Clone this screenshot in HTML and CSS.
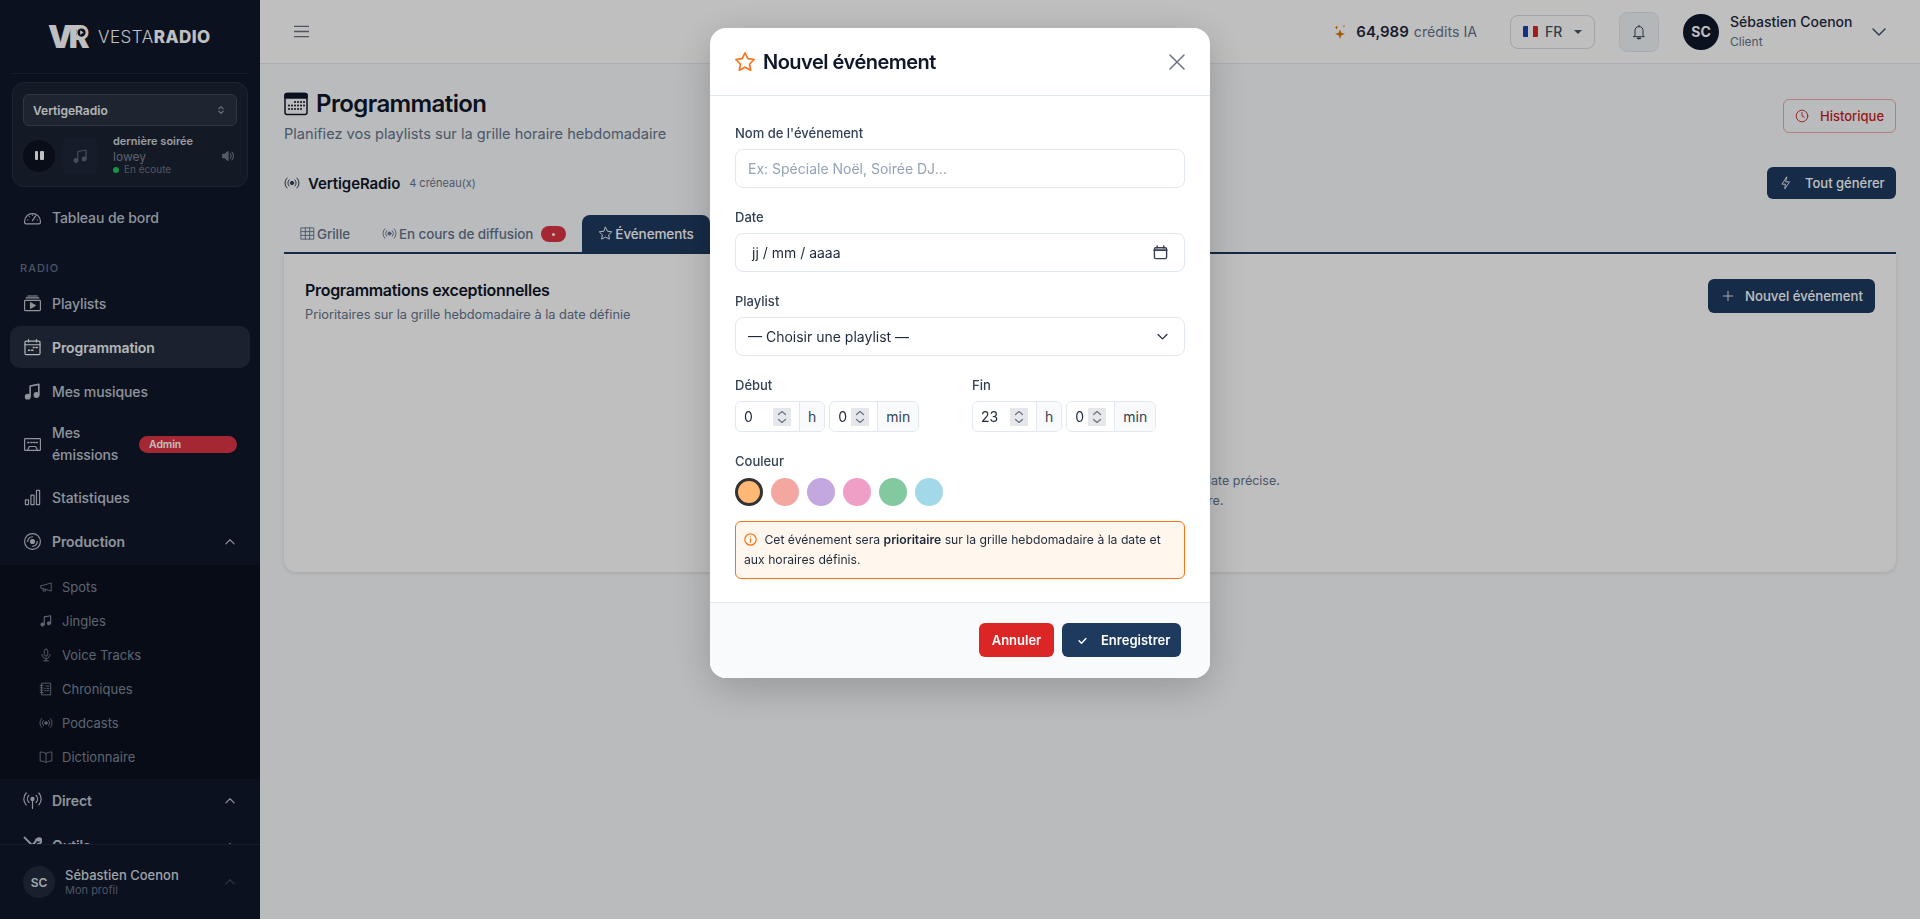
FILE: index.html
```html
<!DOCTYPE html>
<html lang="fr">
<head>
    <meta charset="UTF-8">
    <meta name="viewport" content="width=device-width, initial-scale=1.0">
    <title>Programmation - VestaRadio</title>
    <link rel="stylesheet" href="styles.css">
</head>
<body>
<div class="app">
    <!-- Sidebar -->
    <aside class="sidebar">
        <div class="brand">
            <span class="brand-mark">VR<svg class="brand-play" viewBox="0 0 12 12"><circle cx="6" cy="6" r="5.2" fill="#0f172a" stroke="#fff" stroke-width="1.4"/><path d="M4.6 3.6l3.6 2.4-3.6 2.4z" fill="#fff" stroke="none"/></svg></span>
            <span class="brand-name">VESTA<b>RADIO</b></span>
        </div>

        <div class="player">
            <div class="station-select">
                <span>VertigeRadio</span>
                <svg class="ico-10" viewBox="0 0 12 12"><path d="M3.5 4.5L6 2l2.5 2.5M3.5 7.5L6 10l2.5-2.5"/></svg>
            </div>
            <div class="player-row">
                <span class="pause-btn"><i></i><i></i></span>
                <span class="cover">
                    <svg class="ico-18" viewBox="0 0 24 24"><path d="M9 18V6l11-2v12"/><circle cx="6.5" cy="18" r="2.5" fill="currentColor"/><circle cx="17.5" cy="16" r="2.5" fill="currentColor"/></svg>
                </span>
                <div class="track">
                    <div class="track-title">dernière soirée</div>
                    <div class="track-artist">lowey</div>
                    <div class="track-status"><span class="dot"></span>En écoute</div>
                </div>
                <svg class="volume" viewBox="0 0 16 16"><path d="M2 6h2.5L8 3v10L4.5 10H2z" fill="currentColor"/><path d="M10.5 5.5a3.5 3.5 0 0 1 0 5M12.5 3.5a6.5 6.5 0 0 1 0 9"/></svg>
            </div>
        </div>

        <nav class="nav">
            <a class="nav-item">
                <svg class="nav-ico" viewBox="0 0 24 24"><path d="M2 17a10 10 0 0 1 20 0v1a2 2 0 0 1-2 2H4a2 2 0 0 1-2-2z"/><path d="M12 16l4-6M6 15h.01M8 11h.01M12 9h.01M18 15h.01"/></svg>
                <span>Tableau de bord</span>
            </a>

            <div class="nav-label">RADIO</div>

            <a class="nav-item">
                <svg class="nav-ico" viewBox="0 0 24 24"><rect x="2" y="8" width="20" height="13" rx="1"/><path d="M4 5h16M6 2.5h12"/><path d="M9.5 11l6 3.5-6 3.5z" fill="currentColor"/></svg>
                <span>Playlists</span>
            </a>
            <a class="nav-item active">
                <svg class="nav-ico" viewBox="0 0 24 24"><rect x="2.5" y="4" width="19" height="17" rx="1.5"/><path d="M2.5 8.5h19M7 2v3M17 2v3"/><path d="M13 12h1M16.5 12h1.5M7 15.5h1.5M11 15.5h1.5" stroke-width="2"/></svg>
                <span>Programmation</span>
            </a>
            <a class="nav-item">
                <svg class="nav-ico" viewBox="0 0 24 24"><path d="M9 18V5l11-2v13" stroke-width="2"/><circle cx="6" cy="18.5" r="3" fill="currentColor"/><circle cx="17" cy="16.5" r="3" fill="currentColor"/></svg>
                <span>Mes musiques</span>
            </a>
            <a class="nav-item two-lines">
                <svg class="nav-ico" viewBox="0 0 24 24"><rect x="2" y="4.5" width="20" height="15" rx="1"/><path d="M6 9.5h1.5M10 9.5h1.5M13.5 9.5H15M17 9.5h1" stroke-width="2"/><path d="M5.5 19.5l2.5-5h8l2.5 5"/></svg>
                <span class="nav-text">Mes émissions</span>
                <span class="badge-admin">Admin</span>
            </a>
            <a class="nav-item">
                <svg class="nav-ico" viewBox="0 0 24 24"><rect x="3" y="15" width="4" height="6" rx=".5"/><rect x="10" y="9" width="4" height="12" rx=".5"/><rect x="17" y="3" width="4" height="18" rx=".5"/></svg>
                <span>Statistiques</span>
            </a>
            <a class="nav-item group">
                <svg class="nav-ico" viewBox="0 0 24 24"><circle cx="12" cy="12" r="10"/><circle cx="12" cy="12" r="2.5" fill="currentColor"/><path d="M12 6a6 6 0 0 0-6 6M18 12a6 6 0 0 1-6 6"/></svg>
                <span>Production</span>
                <svg class="nav-chev" viewBox="0 0 16 16"><path d="M2.5 10.5L8 5l5.5 5.5"/></svg>
            </a>
            <div class="subnav">
                <a class="sub-item">
                    <svg class="sub-ico" viewBox="0 0 24 24"><path d="M3 10v4l3 .5 15 4.5V5L6 9.5z"/><path d="M7 15v4h4v-2.8"/></svg>
                    <span>Spots</span>
                </a>
                <a class="sub-item">
                    <svg class="sub-ico" viewBox="0 0 24 24"><path d="M9 18V5l11-2v13" stroke-width="2"/><circle cx="6" cy="18" r="2.8" fill="currentColor"/><circle cx="17" cy="16" r="2.8" fill="currentColor"/></svg>
                    <span>Jingles</span>
                </a>
                <a class="sub-item">
                    <svg class="sub-ico" viewBox="0 0 24 24"><rect x="9" y="2" width="6" height="12" rx="3"/><path d="M5 11a7 7 0 0 0 14 0M12 18v4M8 22h8"/></svg>
                    <span>Voice Tracks</span>
                </a>
                <a class="sub-item">
                    <svg class="sub-ico" viewBox="0 0 24 24"><path d="M5 2h15v20H5zM2 6h5M2 10h5M2 14h5M2 18h5M12 7h5M14 11h3M10 11h1M10 15h7"/></svg>
                    <span>Chroniques</span>
                </a>
                <a class="sub-item">
                    <svg class="sub-ico" viewBox="0 0 24 24"><circle cx="12" cy="12" r="2.2" fill="currentColor"/><path d="M7.5 7.5a6.5 6.5 0 0 0 0 9M16.5 7.5a6.5 6.5 0 0 1 0 9M4.5 4.5a10.5 10.5 0 0 0 0 15M19.5 4.5a10.5 10.5 0 0 1 0 15"/></svg>
                    <span>Podcasts</span>
                </a>
                <a class="sub-item">
                    <svg class="sub-ico" viewBox="0 0 24 24"><path d="M12 6C9.5 4 6 3.5 2 3.5V19c4 0 7.5.5 10 2.5 2.5-2 6-2.5 10-2.5V3.5C18 3.5 14.5 4 12 6zM12 6v15.5"/></svg>
                    <span>Dictionnaire</span>
                </a>
            </div>
            <a class="nav-item group">
                <svg class="nav-ico" viewBox="0 0 24 24"><circle cx="12" cy="10" r="2" fill="currentColor"/><path d="M12 12v10M7.5 5.5a6.5 6.5 0 0 0 0 9M16.5 5.5a6.5 6.5 0 0 1 0 9M4 2.5a11 11 0 0 0 0 15M20 2.5a11 11 0 0 1 0 15"/></svg>
                <span>Direct</span>
                <svg class="nav-chev" viewBox="0 0 16 16"><path d="M2.5 10.5L8 5l5.5 5.5"/></svg>
            </a>
            <a class="nav-item group">
                <svg class="nav-ico" viewBox="0 0 24 24"><path d="M2 2l9 9M22 3c-3-1-6 1-6 4l-12 13 2 2 13-12c3 0 5-3 4-6l-3 2-2-1z" stroke-width="2.5"/></svg>
                <span>Outils</span>
                <svg class="nav-chev" viewBox="0 0 16 16"><path d="M2.5 10.5L8 5l5.5 5.5"/></svg>
            </a>
        </nav>

        <div class="side-user">
            <span class="side-avatar">SC</span>
            <div class="side-user-text">
                <div class="side-user-name">Sébastien Coenon</div>
                <div class="side-user-sub">Mon profil</div>
            </div>
            <svg class="side-chev" viewBox="0 0 16 16"><path d="M2.5 10.5L8 5l5.5 5.5"/></svg>
        </div>
    </aside>

    <!-- Main -->
    <div class="main">
        <header class="topbar">
            <svg class="burger" viewBox="0 0 16 14"><path d="M0 1.5h16M0 7h16M0 12.5h16"/></svg>
            <div class="credits">
                <svg class="sparkle" viewBox="0 0 12 16"><path d="M6 5.5l1.3 3.2L11 10l-3.7 1.3L6 15l-1.3-3.7L1 10l3.700-1.300z"/><path d="M2.500 1.500l.6 1.500 1.400.6-1.400.5-.6 1.500-.6-1.500L.5 3.600 1.900 3zM10 .5l.3 1.200.9.4-.9.4-.3 1.200-.3-1.200-.9-.4.9-.4z"/></svg>
                <b>64,989</b> <span>crédits IA</span>
            </div>
            <div class="lang">
                <span class="flag"><i class="fl-b"></i><i class="fl-w"></i><i class="fl-r"></i></span>
                <span>FR</span>
                <span class="caret"></span>
            </div>
            <span class="bell">
                <svg viewBox="0 0 24 24"><path d="M6 17V10a6 6 0 0 1 12 0v7l2 2H4zM12 2v2"/><path d="M10 21.5h4" stroke-width="2.5"/></svg>
            </span>
            <span class="top-avatar">SC</span>
            <div class="top-user">
                <div class="top-user-name">Sébastien Coenon</div>
                <div class="top-user-role">Client</div>
            </div>
            <svg class="top-chev" viewBox="0 0 16 16"><path d="M2 5l6 6 6-6"/></svg>
        </header>

        <main class="content">
            <div class="page-head">
                <div>
                    <h1 class="page-title">
                        <svg viewBox="0 0 24 24"><rect x="1" y="1.5" width="22" height="21" rx="2"/><path d="M1 3.5a2 2 0 0 1 2-2h18a2 2 0 0 1 2 2V6H1z" fill="currentColor"/><path class="dots" d="M11 10h.01M14 10h.01M17 10h.01M20 10h.01M5 13.5h.01M8 13.5h.01M11 13.5h.01M14 13.5h.01M17 13.5h.01M20 13.5h.01M5 17h.01M8 17h.01M11 17h.01M14 17h.01M17 17h.01"/></svg>
                        Programmation
                    </h1>
                    <p class="page-sub">Planifiez vos playlists sur la grille horaire hebdomadaire</p>
                </div>
                <button class="btn-history">
                    <svg class="ico-14" viewBox="0 0 24 24"><circle cx="12" cy="12" r="10"/><path d="M12 6v6l4 2"/></svg>
                    Historique
                </button>
            </div>

            <div class="station-row">
                <div class="station-info">
                    <svg class="ico-16" viewBox="0 0 24 24"><circle cx="12" cy="12" r="2.5" fill="currentColor"/><path d="M7.5 7.5a6.5 6.5 0 0 0 0 9M16.5 7.5a6.5 6.5 0 0 1 0 9M4.5 4.5a10.5 10.5 0 0 0 0 15M19.5 4.5a10.5 10.5 0 0 1 0 15"/></svg>
                    <strong>VertigeRadio</strong>
                    <small>4 créneau(x)</small>
                </div>
                <button class="btn-primary btn-gen">
                    <svg class="ico-14" viewBox="0 0 24 24"><path d="M13 2L5 14h6l-1 8 8-12h-6z"/></svg>
                    Tout générer
                </button>
            </div>

            <div class="tabs">
                <a class="tab">
                    <svg class="ico-15" viewBox="0 0 24 24"><path d="M2 3h20v18H2zM2 9h20M2 15h20M8.5 3v18M15.5 3v18"/></svg>
                    Grille
                </a>
                <a class="tab">
                    <svg class="ico-15" viewBox="0 0 24 24"><circle cx="12" cy="12" r="2.5" fill="currentColor"/><path d="M7.5 7.5a6.5 6.5 0 0 0 0 9M16.5 7.5a6.5 6.5 0 0 1 0 9M4.5 4.5a10.5 10.5 0 0 0 0 15M19.5 4.5a10.5 10.5 0 0 1 0 15"/></svg>
                    En cours de diffusion
                    <span class="tab-badge"><i></i></span>
                </a>
                <a class="tab active">
                    <svg class="ico-15" viewBox="0 0 24 24"><path d="M12 2l3.1 6.3 6.9 1-5 4.9 1.2 6.800-6.200-3.200L5.800 21 7 14.200 2 9.300l6.900-1z"/></svg>
                    Événements
                </a>
            </div>

            <section class="panel">
                <div class="panel-head">
                    <div>
                        <h2>Programmations exceptionnelles</h2>
                        <p>Prioritaires sur la grille hebdomadaire à la date définie</p>
                    </div>
                    <button class="btn-primary btn-new">
                        <svg class="ico-14" viewBox="0 0 24 24"><path d="M12 4v16M4 12h16"/></svg>
                        Nouvel événement
                    </button>
                </div>
                <div class="empty">
                    <p>Créez un événement pour lancer une playlist à une date précise.</p>
                    <p>Il remplacera alors votre grille hebdomadaire.</p>
                </div>
            </section>
        </main>
    </div>
</div>

<!-- Modal -->
<div class="overlay">
    <div class="modal">
        <div class="modal-head">
            <svg class="modal-star" viewBox="0 0 24 24"><path d="M12 2l3.1 6.3 6.9 1-5 4.9 1.2 6.800-6.200-3.200L5.800 21 7 14.200 2 9.300l6.900-1z"/></svg>
            <h3>Nouvel événement</h3>
            <svg class="modal-close" viewBox="0 0 16 16"><path d="M1 1l14 14M15 1L1 15"/></svg>
        </div>
        <div class="modal-body">
            <div class="field">
                <label>Nom de l'événement</label>
                <input class="control" type="text" placeholder="Ex: Spéciale Noël, Soirée DJ...">
            </div>
            <div class="field">
                <label>Date</label>
                <div class="control control-date">
                    <span>jj / mm / aaaa</span>
                    <svg viewBox="0 0 16 16"><rect x="1.5" y="3" width="13" height="11.5" rx="1.5"/><path d="M1.5 5.5h13" stroke-width="2"/><path d="M4.5 1v2M11.5 1v2"/></svg>
                </div>
            </div>
            <div class="field">
                <label>Playlist</label>
                <div class="control control-select">
                    <span>— Choisir une playlist —</span>
                    <svg viewBox="0 0 16 16"><path d="M2.5 5.5L8 11l5.5-5.5"/></svg>
                </div>
            </div>
            <div class="time-grid">
                <div class="field">
                    <label>Début</label>
                    <div class="time-row">
                        <div class="time-group">
                            <input class="num num-h" type="number" value="0">
                            <span class="spin"><svg viewBox="0 0 18 18"><path d="M5.5 6.5L9 3.5l3.5 3M5.5 11.5L9 14.500l3.500-3"/></svg></span>
                            <span class="unit">h</span>
                        </div>
                        <div class="time-group">
                            <input class="num num-m" type="number" value="0">
                            <span class="spin"><svg viewBox="0 0 18 18"><path d="M5.5 6.5L9 3.5l3.5 3M5.5 11.5L9 14.500l3.500-3"/></svg></span>
                            <span class="unit">min</span>
                        </div>
                    </div>
                </div>
                <div class="field">
                    <label>Fin</label>
                    <div class="time-row">
                        <div class="time-group">
                            <input class="num num-h" type="number" value="23">
                            <span class="spin"><svg viewBox="0 0 18 18"><path d="M5.5 6.5L9 3.5l3.5 3M5.5 11.5L9 14.500l3.500-3"/></svg></span>
                            <span class="unit">h</span>
                        </div>
                        <div class="time-group">
                            <input class="num num-m" type="number" value="0">
                            <span class="spin"><svg viewBox="0 0 18 18"><path d="M5.5 6.5L9 3.5l3.5 3M5.5 11.5L9 14.500l3.500-3"/></svg></span>
                            <span class="unit">min</span>
                        </div>
                    </div>
                </div>
            </div>
            <div class="field field-color">
                <label>Couleur</label>
                <div class="swatches">
                    <span class="swatch selected c1"></span>
                    <span class="swatch c2"></span>
                    <span class="swatch c3"></span>
                    <span class="swatch c4"></span>
                    <span class="swatch c5"></span>
                    <span class="swatch c6"></span>
                </div>
            </div>
            <div class="notice">
                <svg viewBox="0 0 16 16"><circle cx="8" cy="8" r="7"/><path d="M8 7.2v4M8 4.6v.01"/></svg>
                Cet événement sera <b>prioritaire</b> sur la grille hebdomadaire à la date et aux horaires définis.
            </div>
        </div>
        <div class="modal-foot">
            <button class="btn-cancel">Annuler</button>
            <button class="btn-save">
                <svg viewBox="0 0 16 16"><path d="M3 8.5L6.5 12 13 5"/></svg>
                Enregistrer
            </button>
        </div>
    </div>
</div>
</body>
</html>
```

FILE: styles.css
```css
* {
    box-sizing: border-box;
}

body {
    margin: 0;
    font-family: Inter, "Noto Sans", sans-serif;
    background: #f8fafc;
    color: #0f172a;
    overflow: hidden;
}

svg {
    fill: none;
    stroke: currentColor;
    stroke-width: 1.5;
    stroke-linecap: round;
    stroke-linejoin: round;
    flex-shrink: 0;
}

.ico-10 { width: 10px; height: 10px; }
.ico-14 { width: 14px; height: 14px; }
.ico-15 { width: 15px; height: 15px; }
.ico-16 { width: 16px; height: 16px; }
.ico-18 { width: 18px; height: 18px; }

.app {
    display: flex;
    height: 100vh;
}

/* Sidebar */
.sidebar {
    width: 260px;
    flex-shrink: 0;
    background: #0f172a;
    color: #c0c6d0;
    display: flex;
    flex-direction: column;
    height: 100%;
}

.brand {
    height: 74px;
    margin: 0 12px;
    padding: 0 0 0 36px;
    display: flex;
    align-items: center;
    gap: 8px;
    border-bottom: 1px solid #1c2536;
    color: #fff;
}

.brand-mark {
    position: relative;
    font-size: 31px;
    font-weight: 900;
    letter-spacing: -4px;
    line-height: 1;
    width: 42px;
}

.brand-play {
    position: absolute;
    top: 6px;
    right: 3px;
    width: 11px;
    height: 11px;
}

.brand-name {
    font-size: 17px;
    font-weight: 300;
    letter-spacing: .5px;
}

.brand-name b {
    font-weight: 800;
}

.player {
    margin: 8px 12px 0;
    height: 105px;
    padding: 11px 10px;
    background: #1a2232;
    border: 1px solid #273041;
    border-radius: 12px;
}

.station-select {
    height: 32px;
    padding: 0 10px 0 9px;
    display: flex;
    align-items: center;
    justify-content: space-between;
    background: #2a3240;
    border: 1px solid #414a5a;
    border-radius: 6px;
    font-size: 12px;
    font-weight: 600;
    color: #eef0f4;
}

.station-select svg {
    color: #8a92a0;
}

.player-row {
    display: flex;
    align-items: center;
    margin-top: 10px;
}

.pause-btn {
    width: 32px;
    height: 32px;
    border-radius: 50%;
    background: #0b1220;
    display: flex;
    align-items: center;
    justify-content: center;
    gap: 2px;
}

.pause-btn i {
    width: 3.5px;
    height: 9px;
    border-radius: 1px;
    background: #fff;
}

.cover {
    width: 36px;
    height: 36px;
    margin-left: 7px;
    border-radius: 6px;
    background: #1e2738;
    color: #5f6a7a;
    display: flex;
    align-items: center;
    justify-content: center;
}

.track {
    margin-left: 15px;
    margin-top: -2px;
    flex: 1;
    min-width: 0;
}

.track-title {
    font-size: 11px;
    font-weight: 600;
    line-height: 14px;
    margin-bottom: 2px;
    color: #d0d4da;
}

.track-artist {
    font-size: 12px;
    line-height: 14px;
    color: #7a8494;
}

.track-status {
    font-size: 10px;
    line-height: 11px;
    color: #6b7585;
    display: flex;
    align-items: center;
    gap: 5px;
}

.dot {
    width: 6px;
    height: 6px;
    border-radius: 50%;
    background: #22c55e;
}

.volume {
    width: 14px;
    height: 14px;
    margin-right: 2px;
    color: #737d8d;
    stroke-width: 1.3;
}

.nav {
    flex: 1;
    min-height: 0;
    overflow: hidden;
    padding-top: 9px;
}

.nav-item {
    display: flex;
    align-items: center;
    gap: 10px;
    height: 42px;
    margin: 0 10px 2px;
    padding: 0 12px 0 13px;
    border-radius: 10px;
    font-size: 14px;
    font-weight: 500;
    letter-spacing: -.1px;
    color: #bfc5cf;
}

.nav-item.active {
    background: #252e3f;
    color: #f1f3f6;
    font-weight: 600;
}

.nav-item.two-lines {
    height: 60px;
    line-height: 22px;
}

.nav-item.group {
    height: 43px;
    font-weight: 600;
}

.nav-text {
    width: 60px;
    flex-shrink: 0;
}

.nav-ico {
    width: 19px;
    height: 19px;
}

.nav-chev {
    width: 12px;
    height: 12px;
    margin-left: auto;
    margin-right: 2px;
}

.nav-label {
    margin: 23px 0 7px 20px;
    font-size: 11px;
    font-weight: 500;
    letter-spacing: 1px;
    line-height: 14px;
    color: #677184;
}

.badge-admin {
    margin-left: auto;
    width: 98px;
    height: 17px;
    margin-right: 1px;
    padding-left: 10px;
    border-radius: 9px;
    background: #dc3545;
    color: #fff;
    font-size: 10.5px;
    font-weight: 600;
    line-height: 17px;
}

.subnav {
    background: #0b111f;
    padding: 5px 0 5px;
}

.sub-item {
    display: flex;
    align-items: center;
    gap: 9px;
    height: 34px;
    padding-left: 39px;
    font-size: 13px;
    color: #7d8797;
}

.sub-ico {
    width: 14px;
    height: 14px;
}

.side-user {
    height: 75px;
    flex-shrink: 0;
    background: #0f172a;
    border-top: 1px solid #1e2739;
    display: flex;
    align-items: center;
    padding: 0 24px 0 23px;
}

.side-avatar {
    width: 32px;
    height: 32px;
    border-radius: 50%;
    background: #222b3c;
    font-size: 12px;
    font-weight: 600;
    color: #dde0e5;
    display: flex;
    align-items: center;
    justify-content: center;
}

.side-user-text {
    margin-left: 10px;
    flex: 1;
}

.side-user-name {
    font-size: 13px;
    font-weight: 500;
    line-height: 16px;
    color: #d5d9df;
}

.side-user-sub {
    font-size: 11px;
    line-height: 14px;
    color: #667083;
}

.side-chev {
    width: 12px;
    height: 12px;
    color: #3f4859;
}

/* Main */
.main {
    flex: 1;
    min-width: 0;
    display: flex;
    flex-direction: column;
}

.topbar {
    height: 64px;
    flex-shrink: 0;
    background: #fff;
    border-bottom: 1px solid #e2e8f0;
    display: flex;
    align-items: center;
    padding: 0 24px 0 34px;
}

.burger {
    width: 15px;
    height: 13px;
    color: #6b7280;
    margin-right: auto;
}

.credits {
    display: flex;
    align-items: center;
    gap: 5px;
    font-size: 15px;
}

.credits b {
    font-weight: 600;
    color: #1e293b;
}

.credits span {
    font-size: 14.2px;
    color: #64748b;
}

.sparkle {
    width: 12px;
    height: 16px;
    margin-right: 5px;
    fill: #d97706;
    stroke: none;
}

.lang {
    margin-left: 33px;
    width: 85px;
    height: 34px;
    border: 1px solid #d5dbe3;
    border-radius: 8px;
    display: flex;
    align-items: center;
    padding-left: 12px;
    font-size: 14px;
    font-weight: 500;
    color: #475569;
}

.flag {
    display: flex;
    width: 15px;
    height: 11px;
    margin-right: 7px;
    border-radius: 1px;
    overflow: hidden;
}

.flag i {
    flex: 1;
}

.fl-b { background: #1e40af; }
.fl-w { background: #fff; }
.fl-r { background: #dc2626; }

.caret {
    margin-left: 12px;
    border-left: 4px solid transparent;
    border-right: 4px solid transparent;
    border-top: 4px solid #475569;
}

.bell {
    margin-left: 24px;
    width: 40px;
    height: 40px;
    border-radius: 8px;
    background: #f1f5f9;
    border: 1px solid #e2e8f0;
    display: flex;
    align-items: center;
    justify-content: center;
    color: #334155;
}

.bell svg {
    width: 16px;
    height: 16px;
}

.top-avatar {
    margin-left: 24px;
    width: 36px;
    height: 36px;
    border-radius: 50%;
    background: #0f172a;
    color: #fff;
    font-size: 14px;
    font-weight: 700;
    display: flex;
    align-items: center;
    justify-content: center;
}

.top-user {
    margin-left: 11px;
    width: 122px;
    white-space: nowrap;
}

.top-user-name {
    font-size: 14px;
    font-weight: 500;
    line-height: 20px;
    color: #1e293b;
}

.top-user-role {
    font-size: 12px;
    line-height: 20px;
    color: #64748b;
}

.top-chev {
    width: 16px;
    height: 16px;
    margin-left: 19px;
    margin-right: 9px;
    color: #475569;
}

.content {
    padding: 23px 24px 0;
}

.page-head {
    display: flex;
    justify-content: space-between;
    align-items: center;
}

.page-title {
    margin: 0;
    display: flex;
    align-items: center;
    gap: 8px;
    font-size: 24px;
    font-weight: 600;
    letter-spacing: -.6px;
    line-height: 34px;
    color: #0f172a;
}

.page-title svg {
    width: 24px;
    height: 24px;
}

.page-title .dots {
    stroke-width: 2;
}

.page-sub {
    margin: 3px 0 0;
    font-size: 14.6px;
    line-height: 20px;
    color: #64748b;
}

.btn-history {
    height: 34px;
    width: 113px;
    display: flex;
    align-items: center;
    justify-content: center;
    gap: 11px;
    background: transparent;
    border: 1px solid #f0a9a9;
    border-radius: 6px;
    font: 500 13px Inter, sans-serif;
    color: #c81e1e;
}

.station-row {
    margin-top: 23px;
    display: flex;
    align-items: center;
    justify-content: space-between;
}

.station-info {
    display: flex;
    align-items: center;
    gap: 8px;
    color: #334155;
}

.station-info strong {
    font-size: 15px;
    font-weight: 600;
    letter-spacing: -.1px;
    color: #0f172a;
}

.station-info small {
    margin-left: 1px;
    font-size: 11px;
    color: #64748b;
}

.btn-primary {
    display: flex;
    align-items: center;
    border: none;
    background: #1e3a5f;
    color: #fff;
    border-radius: 6px;
    font: 500 13px Inter, sans-serif;
}

.btn-gen {
    width: 129px;
    height: 32px;
    padding-left: 12px;
    gap: 12px;
}

.btn-new {
    width: 167px;
    height: 34px;
    padding-left: 13px;
    gap: 10px;
    font-size: 13.2px;
}

.tabs {
    margin-top: 16px;
    height: 39px;
    display: flex;
    align-items: stretch;
    border-bottom: 2px solid #1e3a5f;
}

.tab {
    display: flex;
    align-items: center;
    gap: 2px;
    padding: 0 16px;
    font-size: 13.5px;
    font-weight: 500;
    letter-spacing: -.1px;
    color: #64748b;
}

.tab.active {
    background: #1e3a5f;
    color: #fff;
    border-radius: 8px 8px 0 0;
}

.tab-badge {
    width: 25px;
    height: 16px;
    margin-left: 6px;
    border-radius: 8px;
    background: #dc3545;
    display: flex;
    align-items: center;
    justify-content: center;
}

.tab-badge i {
    width: 3px;
    height: 3px;
    margin-top: 2px;
    border-radius: 50%;
    background: #fff;
}

.panel {
    height: 318px;
    background: #fff;
    border-radius: 0 0 12px 12px;
    box-shadow: 0 1px 4px rgba(0, 0, 0, .12);
    padding: 25px 21px 0 21px;
}

.panel-head {
    display: flex;
    justify-content: space-between;
    align-items: flex-start;
}

.panel-head h2 {
    margin: 0;
    font-size: 16px;
    font-weight: 600;
    letter-spacing: -.3px;
    line-height: 22px;
}

.panel-head p {
    margin: 4px 0 0;
    font-size: 12.8px;
    line-height: 20px;
    color: #64748b;
}

.empty {
    margin-top: 146px;
    text-align: center;
    font-size: 12.5px;
    line-height: 20px;
    color: #64748b;
}

.empty p {
    margin: 0;
}

/* Modal */
.overlay {
    position: fixed;
    inset: 0;
    background: rgba(0, 0, 0, .25);
    display: flex;
    justify-content: center;
    align-items: flex-start;
    padding-top: 28px;
}

.modal {
    width: 500px;
    height: 650px;
    background: #fff;
    border-radius: 16px;
    box-shadow: 0 10px 40px rgba(0, 0, 0, .2);
    display: flex;
    flex-direction: column;
    overflow: hidden;
}

.modal-head {
    height: 68px;
    flex-shrink: 0;
    padding: 0 25px;
    border-bottom: 1px solid #e2e8f0;
    display: flex;
    align-items: center;
}

.modal-star {
    width: 22px;
    height: 22px;
    margin-left: -1px;
    color: #f97316;
    stroke-width: 1.8;
}

.modal-head h3 {
    margin: 0 0 0 7px;
    font-size: 20px;
    font-weight: 600;
    letter-spacing: -.5px;
    color: #0f172a;
}

.modal-close {
    width: 16px;
    height: 16px;
    margin-left: auto;
    color: #6b7280;
}

.modal-body {
    flex: 1;
    padding: 29px 25px 0;
}

.field {
    margin-bottom: 21px;
}

.field label {
    display: block;
    margin-bottom: 8px;
    font-size: 13px;
    font-weight: 500;
    line-height: 16px;
    color: #334155;
}

.control {
    display: flex;
    align-items: center;
    justify-content: space-between;
    width: 100%;
    height: 39px;
    padding: 0 12px;
    background: #fff;
    border: 1px solid #e2e8f0;
    border-radius: 8px;
    font: 400 14px Inter, sans-serif;
    color: #1e293b;
    outline: none;
}

.control::placeholder {
    color: #94a3b8;
}

.control-date {
    padding: 0 16px;
}

.control-date svg {
    width: 15px;
    height: 15px;
    color: #374151;
}

.control-select svg {
    width: 13px;
    height: 13px;
    margin-right: 3px;
}

.time-grid {
    display: grid;
    grid-template-columns: 1fr 1fr;
    column-gap: 24px;
}

.time-row {
    display: flex;
    gap: 4px;
}

.time-group {
    display: flex;
    align-items: center;
    height: 31px;
    border: 1px solid #e2e8f0;
    border-radius: 6px;
    overflow: hidden;
}

.unit {
    display: flex;
    align-items: center;
    align-self: stretch;
    padding: 0 8px;
    background: #f8fafc;
    border-left: 1px solid #e2e8f0;
    font-size: 14px;
    color: #334155;
}

.num {
    appearance: textfield;
    border: none;
    outline: none;
    padding: 0 0 0 8px;
    font: 400 14px Inter, sans-serif;
    color: #1e293b;
}

.num::-webkit-inner-spin-button {
    appearance: none;
}

.num-h { width: 37px; }
.num-m { width: 21px; }

.spin {
    width: 18px;
    height: 18px;
    margin-right: 8px;
    background: #e5e7eb;
    color: #6b7280;
    display: flex;
}

.spin svg {
    width: 18px;
    height: 18px;
    stroke-width: 1.2;
}

.field-color {
    margin-bottom: 15px;
}

.field-color label {
    margin-bottom: 9px;
}

.swatches {
    display: flex;
    gap: 8px;
}

.swatch {
    width: 28px;
    height: 28px;
    border-radius: 50%;
}

.swatch.selected {
    border: 3px solid #333;
}

.c1 { background: #ffb974; }
.c2 { background: #f4a7a0; }
.c3 { background: #c3a8df; }
.c4 { background: #ef9fc6; }
.c5 { background: #82c9a0; }
.c6 { background: #a2d8e8; }

.notice {
    padding: 8px;
    background: #fff7ed;
    border: 1px solid #f97316;
    border-radius: 6px;
    font-size: 12.2px;
    line-height: 20px;
    color: #1e293b;
}

.notice b {
    font-weight: 600;
}

.notice svg {
    width: 13px;
    height: 13px;
    margin-right: 4px;
    color: #f97316;
    vertical-align: -2px;
}

.modal-foot {
    height: 76px;
    flex-shrink: 0;
    background: #f8fafc;
    border-top: 1px solid #e2e8f0;
    padding: 20px 29px 0 0;
    display: flex;
    justify-content: flex-end;
    gap: 8px;
}

.modal-foot button {
    height: 34px;
    border: none;
    border-radius: 6px;
    color: #fff;
    font: 600 13px Inter, sans-serif;
}

.btn-cancel {
    width: 75px;
    background: #dc2626;
}

.modal-foot .btn-save {
    width: 119px;
    background: #1e3a5f;
    display: flex;
    align-items: center;
    gap: 13px;
    padding-left: 15px;
}

.btn-save svg {
    width: 11px;
    height: 11px;
    stroke-width: 2;
}
```
